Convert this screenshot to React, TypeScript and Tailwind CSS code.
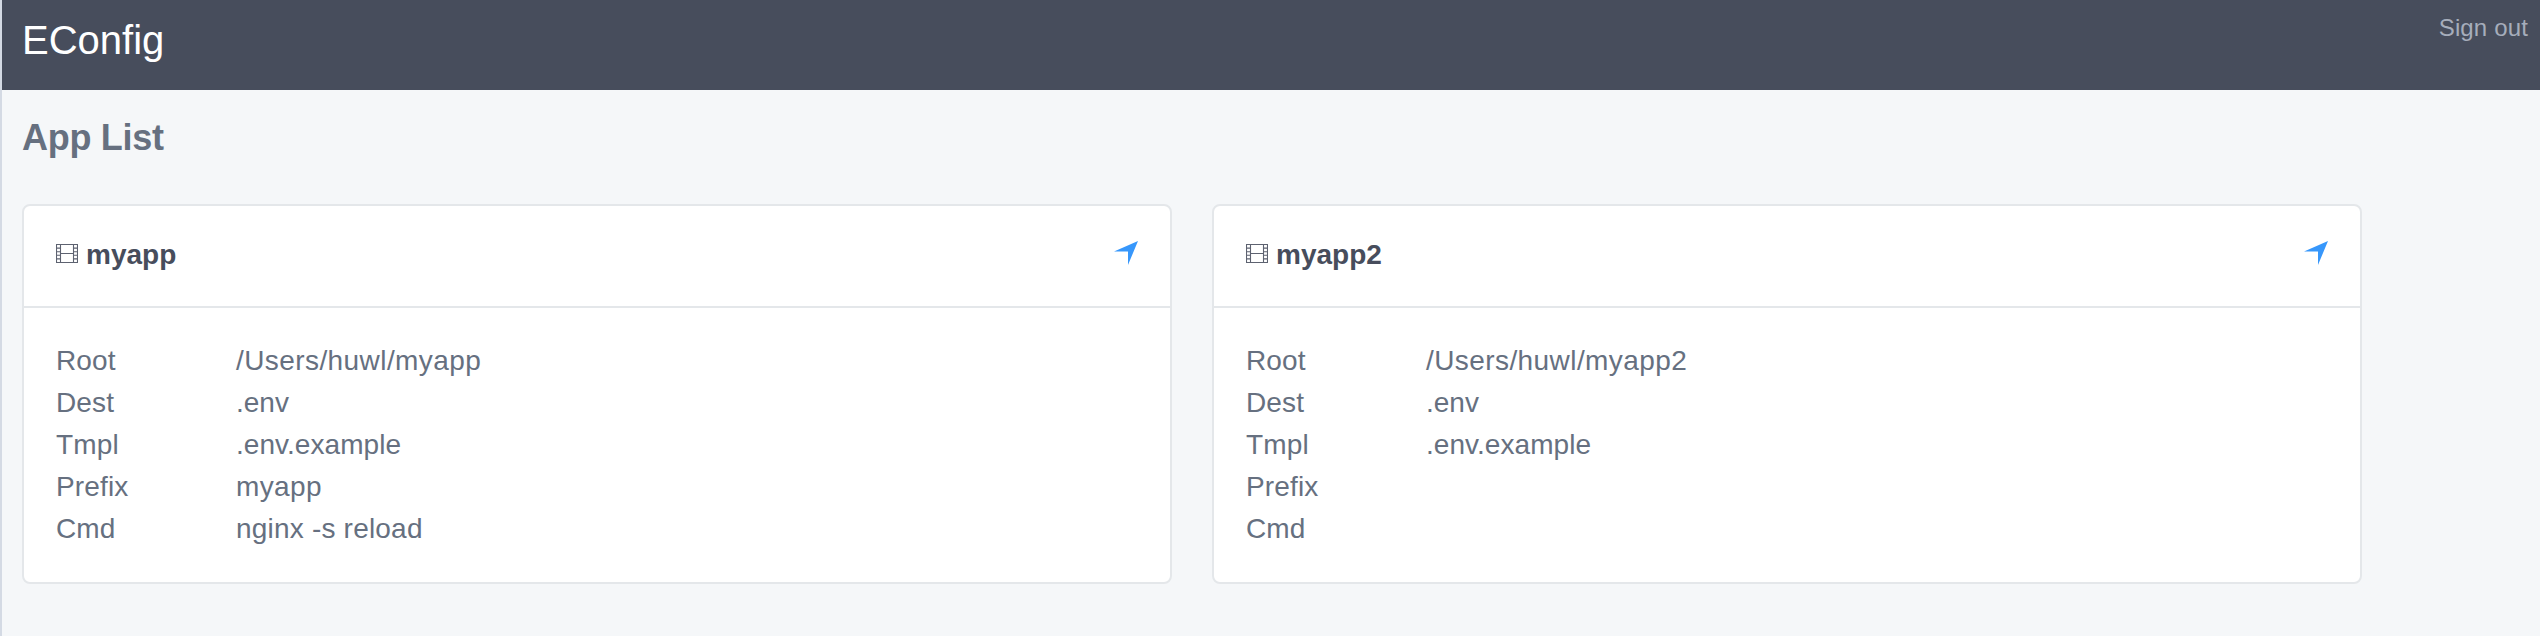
type AppInfo = {
  name: string;
  rows: [string, string, string][];
};

const apps: AppInfo[] = [
  {
    name: "myapp",
    rows: [
      ["Root", "/Users/huwl/myapp", "tracking-[0.42px]"],
      ["Dest", ".env", "tracking-normal"],
      ["Tmpl", ".env.example", "tracking-[0.05px]"],
      ["Prefix", "myapp", "tracking-[0.4px]"],
      ["Cmd", "nginx -s reload", "tracking-[0.2px]"],
    ],
  },
  {
    name: "myapp2",
    rows: [
      ["Root", "/Users/huwl/myapp2", "tracking-[0.42px]"],
      ["Dest", ".env", "tracking-normal"],
      ["Tmpl", ".env.example", "tracking-[0.05px]"],
      ["Prefix", "", "tracking-normal"],
      ["Cmd", "", "tracking-normal"],
    ],
  },
];

function FilmIcon() {
  return (
    <svg width="22" height="19" viewBox="0 0 22 19" fill="none" stroke="#5d6270" strokeWidth="1.1">
      <path d="M.5.5h21v18H.5zM4.500.5v18M17.500.5v18M4.500 9.500h13" />
      <path d="M.5 4.100h4M.5 7.700h4M.5 11.300h4M.5 14.900h4M17.500 4.100h4M17.500 7.700h4M17.500 11.300h4M17.500 14.900h4" />
    </svg>
  );
}

function ArrowIcon() {
  return (
    <svg width="24" height="24" viewBox="0 0 24 24" fill="#3797fb">
      <path d="M24 0 14 24V10.500H0z" />
    </svg>
  );
}

function AppCard({ app }: { app: AppInfo }) {
  return (
    <section className="h-[380px] w-[1150px] rounded-lg border-2 border-[#e4e7ea] bg-white">
      <header className="flex h-[102px] items-start justify-between border-b-2 border-[#e4e7ea] px-8">
        <div className="flex">
          <div className="pt-[38px]">
            <FilmIcon />
          </div>
          <h3 className="ml-2 pt-7 text-[28px] leading-[42px] font-bold text-[#474d5c]">
            {app.name}
          </h3>
        </div>
        <a href="#" className="pt-[35px]" aria-label="Open">
          <ArrowIcon />
        </a>
      </header>
      <dl className="p-8 text-[28px] leading-[42px]">
        {app.rows.map(([label, value, tracking]) => (
          <div key={label} className="flex h-[42px]">
            <dt className="w-[180px] tracking-[0.15px]">{label}</dt>
            <dd className={tracking}>{value}</dd>
          </div>
        ))}
      </dl>
    </section>
  );
}

export default function App() {
  return (
    <div className="h-[636px] w-[2540px] overflow-hidden border-l-2 border-[#d4dae4] bg-[#f5f7f9] font-['Liberation_Sans',Arial,sans-serif] text-[#667080]">
      <header className="flex h-[90px] items-start justify-between bg-[#474d5c] pt-[10px] pr-3 pl-5">
        <h1 className="text-[40px] leading-[60px] text-white">EConfig</h1>
        <a href="#" className="text-2xl leading-9 tracking-[0.15px] text-[#a6adbb]">
          Sign out
        </a>
      </header>
      <main className="px-5 pt-[21px]">
        <h2 className="text-[36px] leading-[54px] font-bold tracking-[-0.3px]">App List</h2>
        <div className="mt-[39px] flex gap-10">
          {apps.map((app) => (
            <AppCard key={app.name} app={app} />
          ))}
        </div>
      </main>
    </div>
  );
}
